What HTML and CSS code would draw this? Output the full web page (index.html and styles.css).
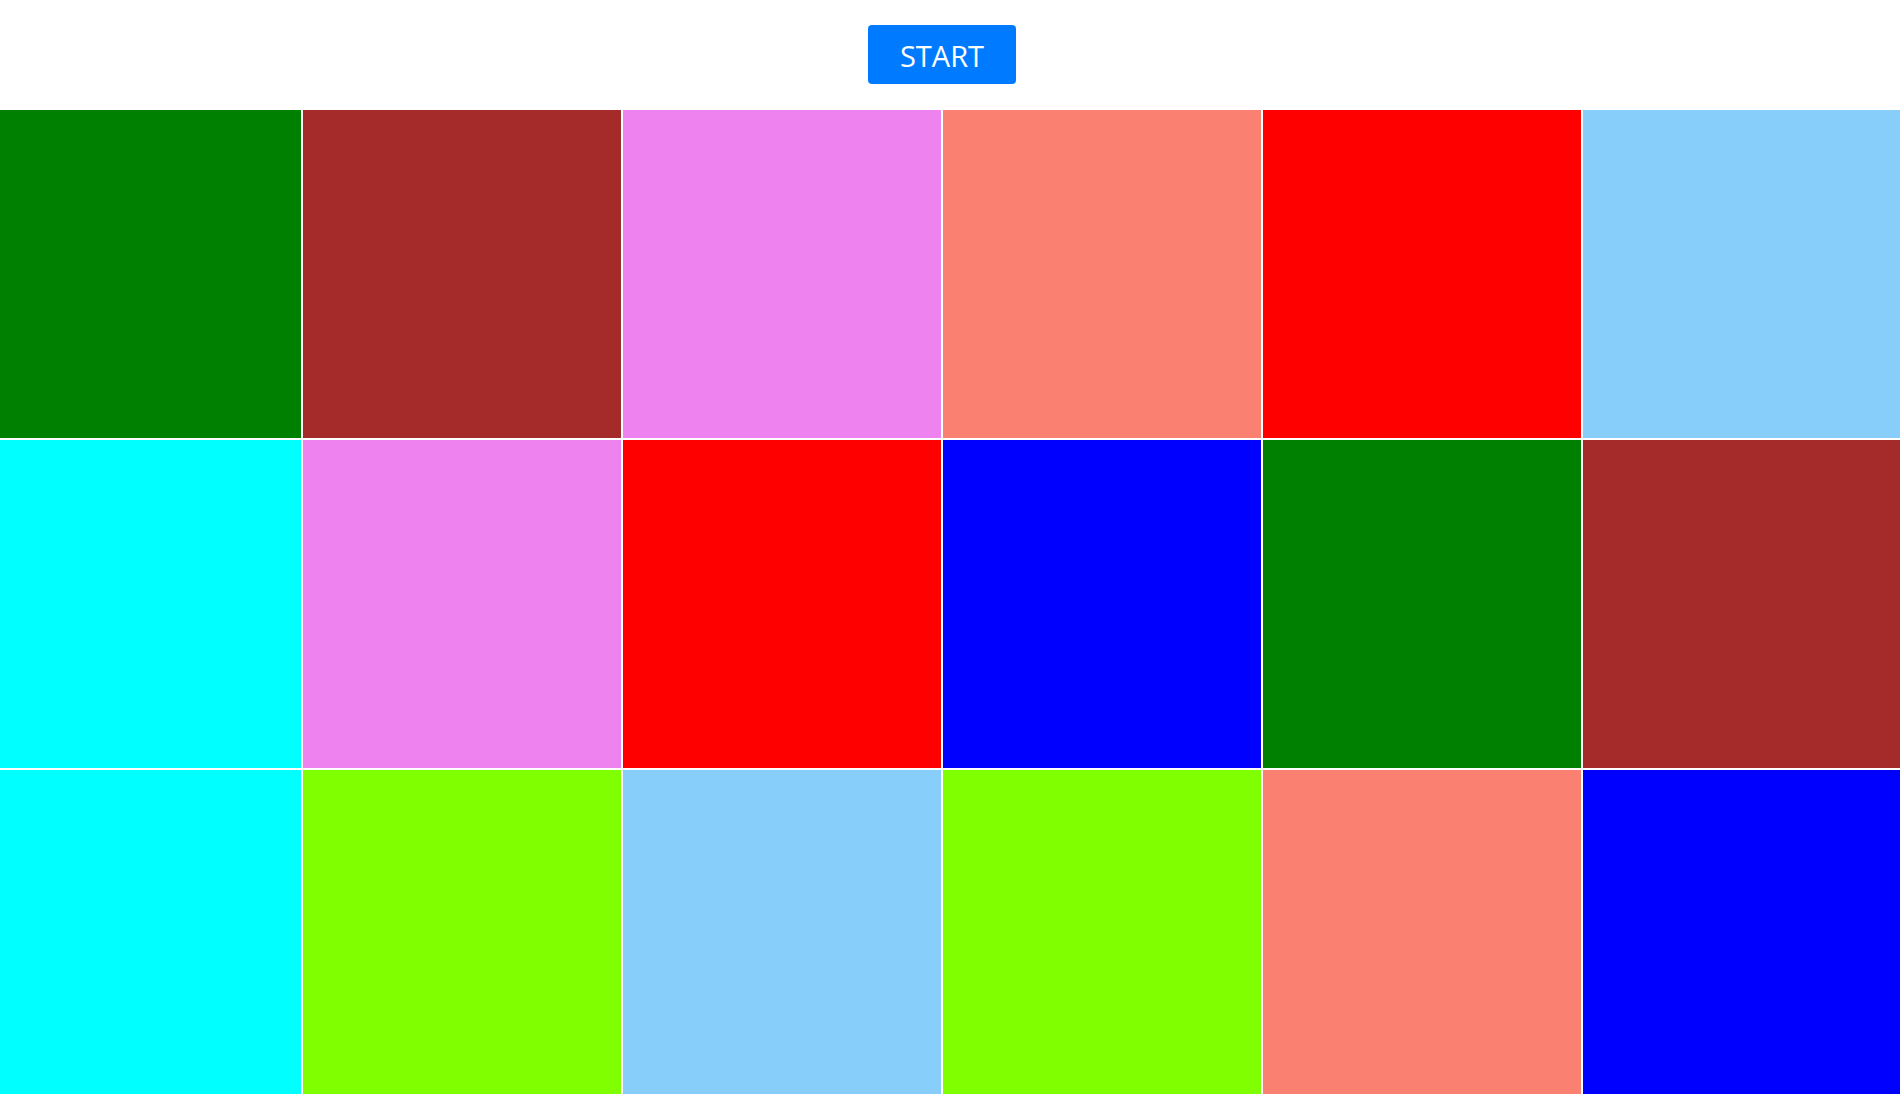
FILE: index.html
```html
<!DOCTYPE html>
<html lang="en">
<head>
<meta charset="utf-8">
<title>Colors</title>
<link rel="stylesheet" href="styles.css">
</head>
<body>
<header class="top">
  <button class="start-btn" type="button">START</button>
</header>
<main class="board">
  <div class="tile green"></div>
  <div class="tile brown"></div>
  <div class="tile violet"></div>
  <div class="tile salmon"></div>
  <div class="tile red"></div>
  <div class="tile sky"></div>
  <div class="tile cyan"></div>
  <div class="tile violet"></div>
  <div class="tile red"></div>
  <div class="tile blue"></div>
  <div class="tile green"></div>
  <div class="tile brown"></div>
  <div class="tile cyan"></div>
  <div class="tile lime"></div>
  <div class="tile sky"></div>
  <div class="tile lime"></div>
  <div class="tile salmon"></div>
  <div class="tile blue"></div>
</main>
</body>
</html>
```
FILE: styles.css
```css
html, body {
  margin: 0;
  padding: 0;
  background: #ffffff;
  overflow: hidden;
  font-family: "Open Sans", "Noto Sans", sans-serif;
}
.top {
  display: flex;
  justify-content: center;
  padding: 25px 16px 26px 0;
}
.start-btn {
  width: 148px;
  height: 59px;
  border: none;
  border-radius: 4px;
  background: #007bff;
  color: #ffffff;
  font-family: "Open Sans", "Noto Sans", sans-serif;
  font-size: 29px;
  padding: 2px 0 0;
  cursor: pointer;
}
.board {
  display: grid;
  grid-template-columns: 301px 318px 318px 318px 318px 317px;
  grid-auto-rows: 328px;
  gap: 2px;
}
.green { background: #008000; }
.brown { background: #a52a2a; }
.violet { background: #ee82ee; }
.salmon { background: #fa8072; }
.red { background: #ff0000; }
.sky { background: #87cefa; }
.cyan { background: #00ffff; }
.blue { background: #0000ff; }
.lime { background: #7fff00; }
```
